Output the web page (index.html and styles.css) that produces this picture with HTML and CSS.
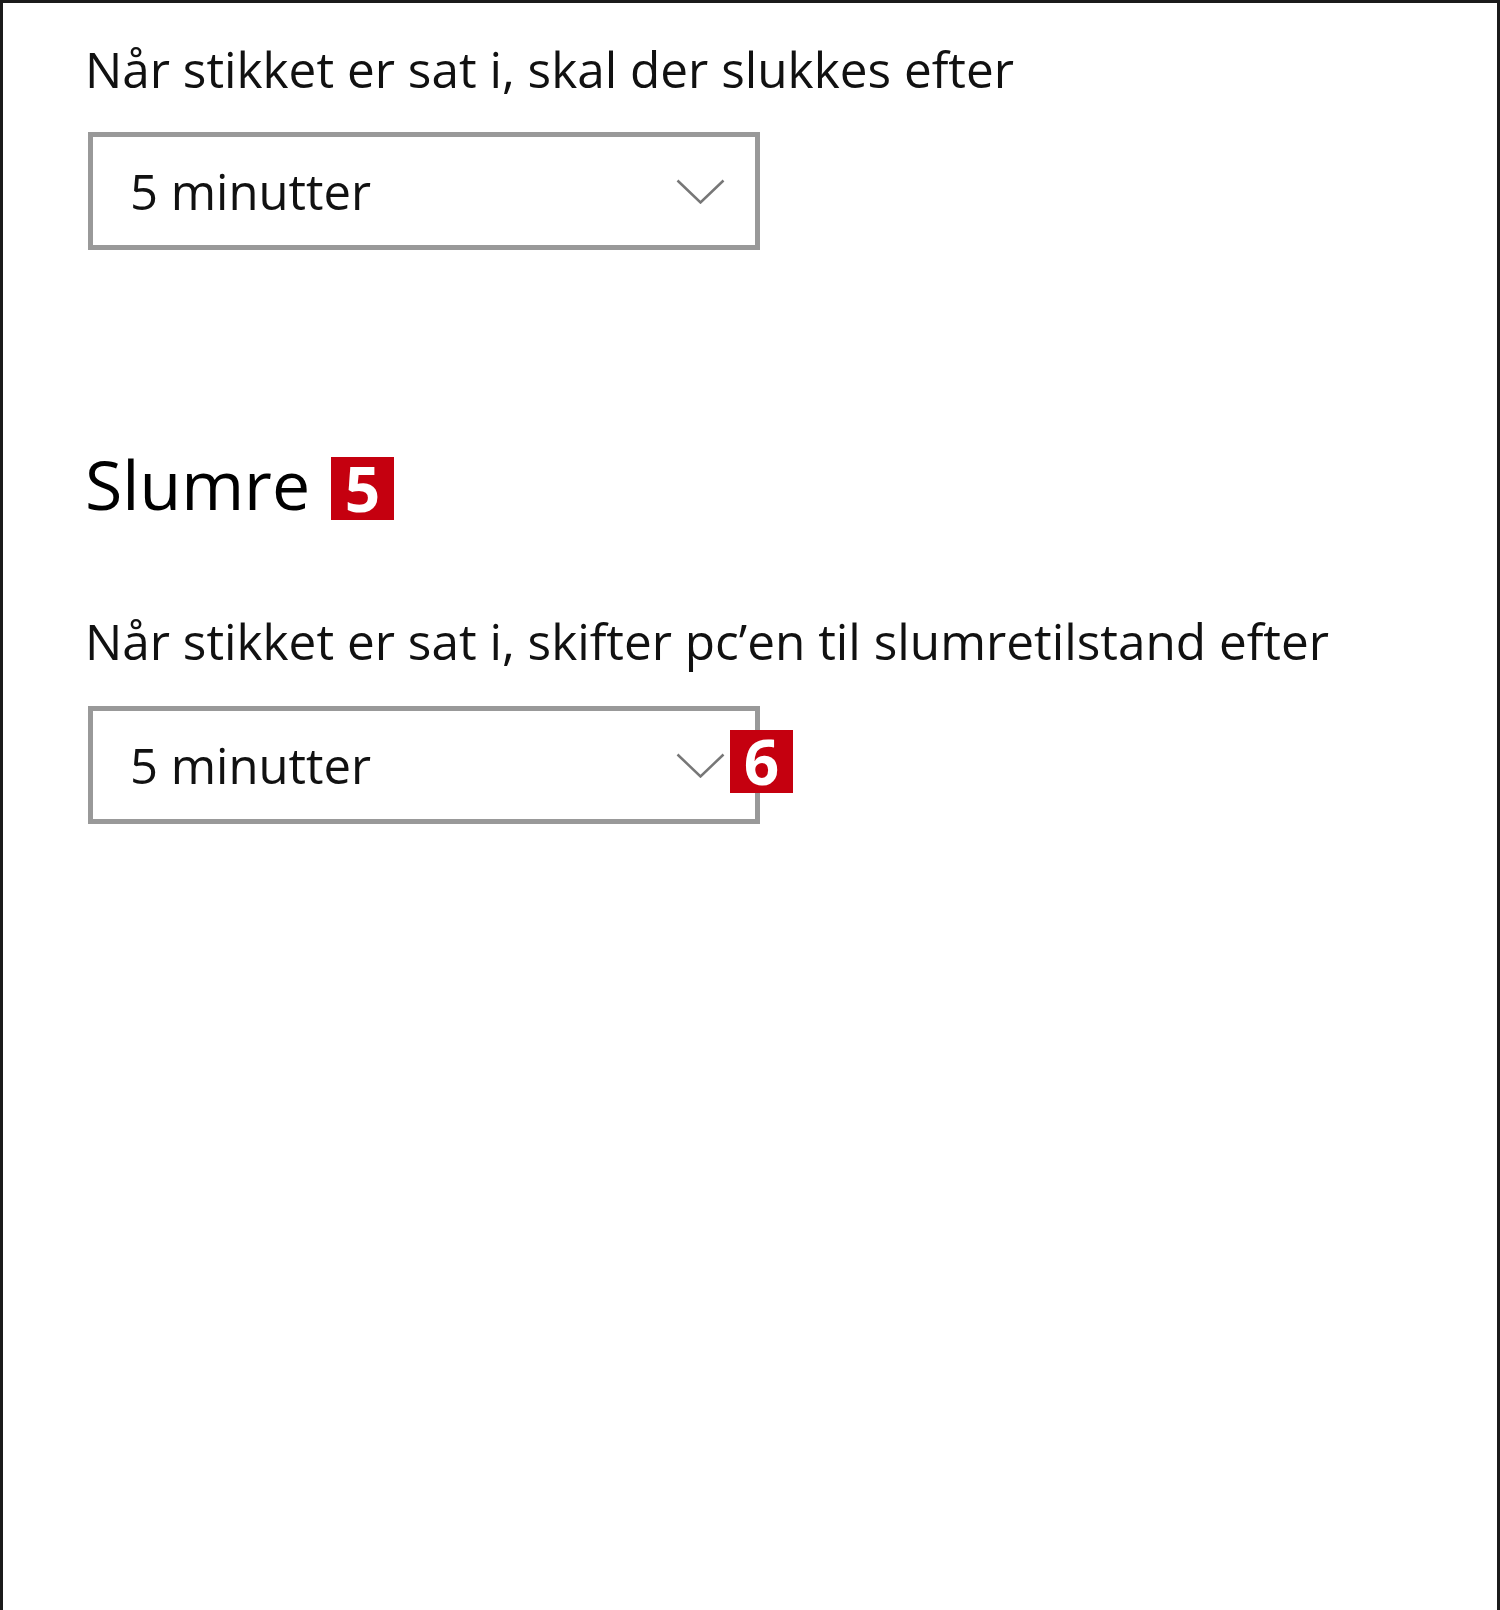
FILE: index.html
```html
<!DOCTYPE html>
<html lang="da">
<head>
  <meta charset="UTF-8" />
  <meta name="viewport" content="width=device-width, initial-scale=1.0"/>
  <title>Strøm og slumre</title>
  <link rel="stylesheet" href="styles.css">
</head>
<body>
  <div class="frame">
    <div class="setting">
      <div class="label">Når stikket er sat i, skal der slukkes efter</div>
      <div class="select">
        <span class="select-value">5 minutter</span>
        <svg class="chevron" width="49" height="25" viewBox="0 0 49 25">
          <polyline points="1.5,1.5 24.5,23.5 47.5,1.5" />
        </svg>
      </div>
    </div>

    <div class="section-title">
      <h2>Slumre</h2>
      <span class="badge">5</span>
    </div>

    <div class="setting setting-sleep">
      <div class="label">Når stikket er sat i, skifter pc’en til slumretilstand efter</div>
      <div class="select">
        <span class="select-value">5 minutter</span>
        <svg class="chevron" width="49" height="25" viewBox="0 0 49 25">
          <polyline points="1.5,1.5 24.5,23.5 47.5,1.5" />
        </svg>
        <span class="badge badge-over">6</span>
      </div>
    </div>
  </div>
</body>
</html>
```

FILE: styles.css
```css
body {
  margin: 0;
  font-family: "Open Sans", "Noto Sans", sans-serif;
  background: #fff;
  color: #000;
}

.frame {
  box-sizing: border-box;
  width: 1500px;
  min-height: 1610px;
  border: 3px solid #1b1b1b;
  border-bottom: none;
  padding: 36px 0 0 82px;
  background: #fff;
}

.label {
  font-size: 49.5px;
  line-height: 60px;
  color: #111;
  margin-bottom: 33px;
}

.setting-sleep {
  margin-top: 87px;
}

.setting-sleep .label {
  margin-bottom: 35px;
}

.select {
  position: relative;
  box-sizing: border-box;
  width: 672px;
  height: 118px;
  margin-left: 3px;
  border: 5px solid #999;
  display: flex;
  align-items: center;
  justify-content: space-between;
  padding: 0 30px 0 37px;
}

.select-value {
  font-size: 49px;
  line-height: 60px;
  color: #111;
}

.chevron polyline {
  fill: none;
  stroke: #777;
  stroke-width: 2.5;
}

.section-title {
  display: flex;
  align-items: flex-start;
  margin-top: 194px;
}

.section-title h2 {
  margin: 0;
  font-size: 68px;
  line-height: 80px;
  font-weight: normal;
  color: #000;
}

.badge {
  width: 63px;
  height: 63px;
  background: #c5000f;
  color: #fff;
  font-size: 62px;
  font-weight: bold;
  line-height: 63px;
  text-align: center;
}

.section-title .badge {
  margin: 13px 0 0 21px;
}

.badge-over {
  position: absolute;
  top: 19px;
  right: -38px;
}
```
